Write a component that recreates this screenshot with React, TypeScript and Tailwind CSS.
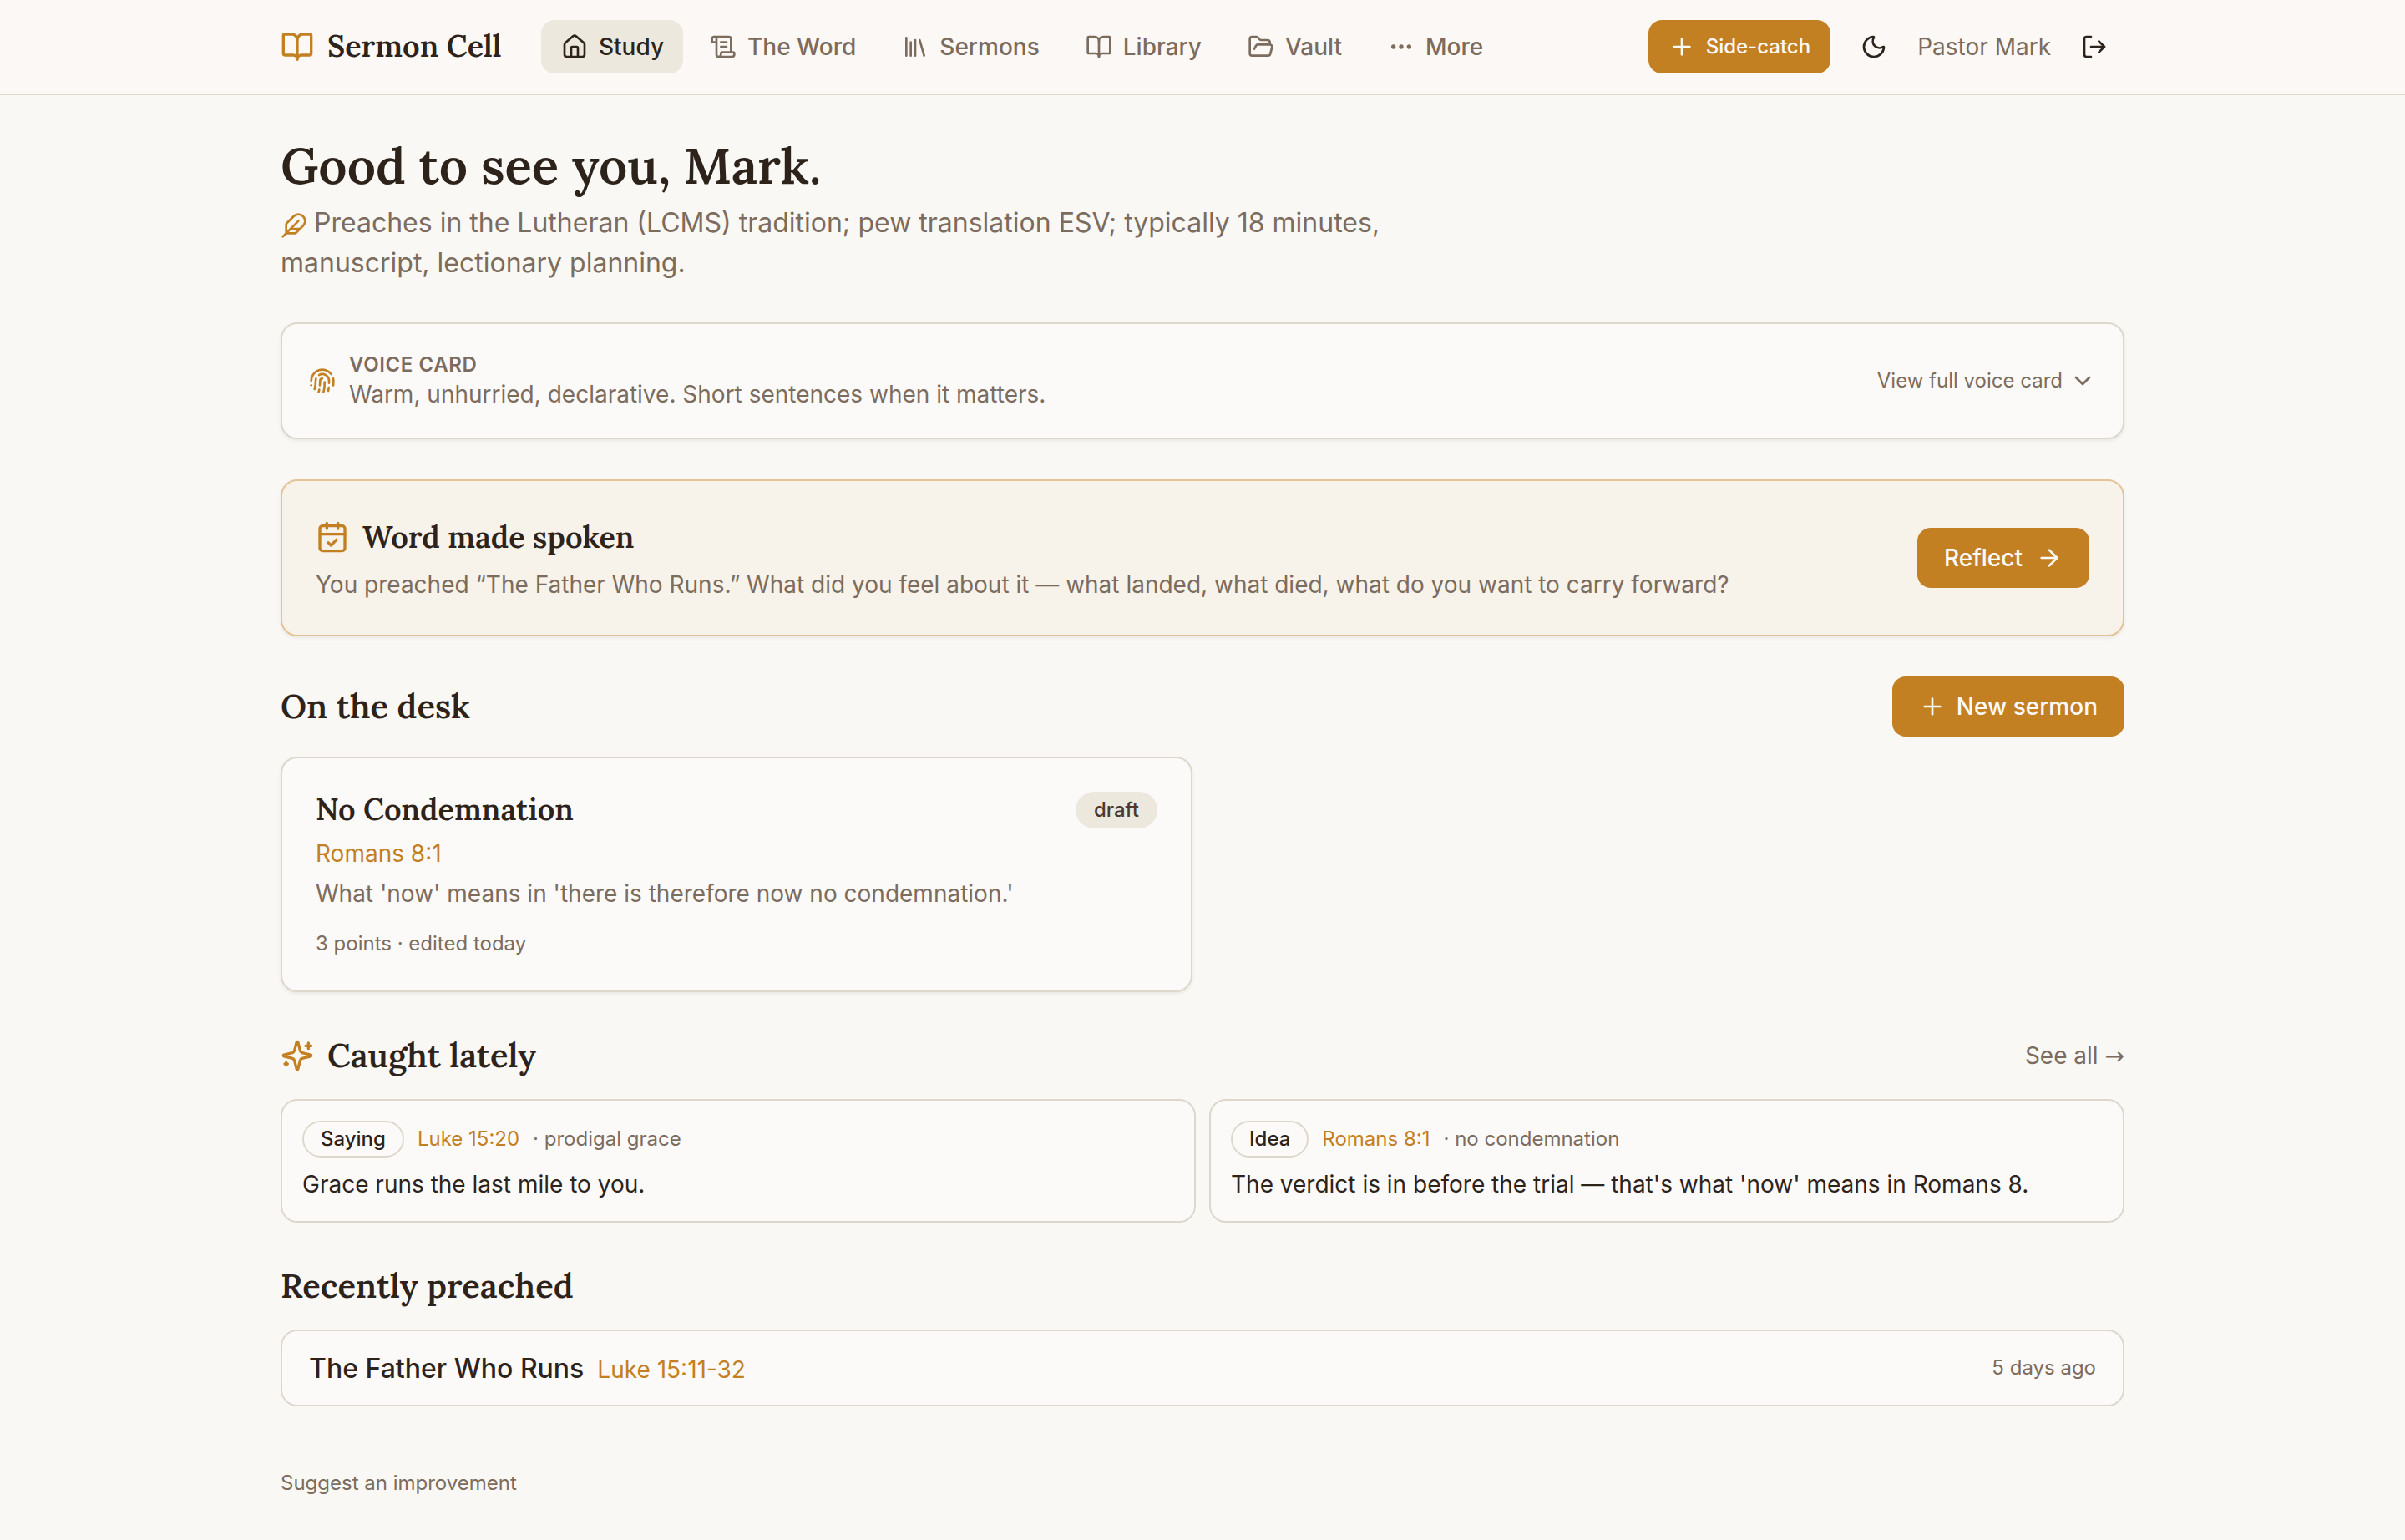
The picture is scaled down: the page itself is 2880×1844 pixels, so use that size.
import type { ReactNode } from "react";
import {
  ArrowRight,
  BookOpen,
  CalendarCheck,
  ChevronDown,
  Ellipsis,
  Feather,
  Fingerprint,
  FolderOpen,
  House,
  Library,
  LogOut,
  Moon,
  Plus,
  ScrollText,
} from "lucide-react";

const serif = "font-['Lora','Liberation_Serif',serif] font-semibold text-[#2d231b]";

const navItems = [
  { label: "Study", icon: House, active: true },
  { label: "The Word", icon: ScrollText },
  { label: "Sermons", icon: Library },
  { label: "Library", icon: BookOpen },
  { label: "Vault", icon: FolderOpen },
  { label: "More", icon: Ellipsis },
];

const catches = [
  { kind: "Saying", reference: "Luke 15:20", topic: "prodigal grace", text: "Grace runs the last mile to you." },
  {
    kind: "Idea",
    reference: "Romans 8:1",
    topic: "no condemnation",
    text: "The verdict is in before the trial — that's what 'now' means in Romans 8.",
  },
];

function Sparkles({ className }: { className?: string }) {
  return (
    <svg
      viewBox="0 0 24 24"
      fill="none"
      stroke="currentColor"
      strokeWidth="2"
      strokeLinecap="round"
      strokeLinejoin="round"
      className={className}
    >
      <path d="M9.937 15.5A2 2 0 0 0 8.5 14.063l-6.135-1.582a.5.5 0 0 1 0-.962L8.5 9.936A2 2 0 0 0 9.937 8.5l1.582-6.135a.5.5 0 0 1 .963 0L14.063 8.5A2 2 0 0 0 15.5 9.937l6.135 1.581a.5.5 0 0 1 0 .964L15.5 14.063a2 2 0 0 0-1.437 1.437l-1.582 6.135a.5.5 0 0 1-.963 0z" />
      <path d="M20 3v4" />
      <path d="M22 5h-4" />
      <path d="M4 17v2" />
      <path d="M5 18H3" />
    </svg>
  );
}

function Header() {
  return (
    <header className="border-b-2 border-[#ded8cc] bg-[#fcf8f5]">
      <div className="mx-auto flex h-28 w-[2208px] items-center">
        <a className="flex items-center gap-4">
          <BookOpen className="size-10 text-[#c38022]" />
          <span className={`${serif} w-[208px] pb-0.5 text-[36px] leading-[54px] whitespace-nowrap`}>Sermon Cell</span>
        </a>

        <nav className="ml-12 flex items-center gap-2">
          {navItems.map(({ label, icon: Icon, active }) => (
            <a
              key={label}
              className={`flex h-16 items-center gap-[13px] rounded-2xl pr-[23px] pl-6 text-[28px] font-medium ${
                active ? "bg-[#ece8dd] text-[#2d231b]" : "text-[#7c6c5e]"
              }`}
            >
              <Icon className="size-8" />
              {label}
            </a>
          ))}
        </nav>

        <div className="ml-auto flex items-center gap-4">
          <button className="flex h-16 items-center gap-[13px] rounded-2xl bg-[#c38022] px-6 text-[24px] font-medium text-[#fcfaf8]">
            <Plus className="size-8" />
            Side-catch
          </button>
          <button className="flex size-18 items-center justify-center text-[#2d231b]">
            <Moon className="size-8" />
          </button>
          <span className="text-[28px] text-[#7c6c5e]">Pastor Mark</span>
          <button className="flex size-18 items-center justify-center text-[#2d231b]">
            <LogOut className="size-8" />
          </button>
        </div>
      </div>
    </header>
  );
}

function PrimaryButton({ children }: { children: ReactNode }) {
  return (
    <button className="flex h-18 shrink-0 items-center gap-[13px] rounded-2xl bg-[#c38022] px-8 text-[28px] font-medium text-[#fcfaf8]">
      {children}
    </button>
  );
}

export default function App() {
  return (
    <div className="min-h-[1844px] bg-[#f9f8f4] font-['Inter',sans-serif] text-[#2d231b]">
      <Header />

      <main className="mx-auto flex w-[2208px] flex-col gap-12 pt-12">
        {/* Greeting */}
        <div>
          <h1 className={`${serif} text-[60px] leading-[72px]`}>Good to see you, Mark.</h1>
          <p className="mt-[9px] -mb-px max-w-[1344px] text-[32px] leading-[48px] text-[#7c6c5e]">
            <Feather className="mr-2 inline size-8 align-text-bottom text-[#c38022]" />
            Preaches in the Lutheran (LCMS) tradition; pew translation ESV; typically 18 minutes, manuscript, lectionary
            planning.
          </p>
        </div>

        {/* Voice card */}
        <section className="flex items-center rounded-[20px] border-2 border-[#ded8cc] bg-[#fcfaf8] p-8 text-[#7c6c5e] shadow-[0_2px_4px_rgba(0,0,0,0.07)]">
          <Fingerprint className="mr-4 size-8 text-[#c38022]" />
          <div>
            <div className="pt-px text-[24px] leading-[31px] font-semibold tracking-wide uppercase">Voice card</div>
            <p className="text-[28px] leading-10">Warm, unhurried, declarative. Short sentences when it matters.</p>
          </div>
          <button className="ml-auto flex items-center gap-2 text-[24px]">
            View full voice card
            <ChevronDown className="size-8" />
          </button>
        </section>

        {/* Reflection prompt */}
        <section className="flex items-center justify-between rounded-[20px] border-2 border-[#e4c497] bg-[#f7f2ea] p-10 shadow-[0_2px_4px_rgba(0,0,0,0.07)]">
          <div>
            <h2 className={`${serif} flex items-center gap-4 text-[36px] leading-[54px]`}>
              <CalendarCheck className="size-10 text-[#c38022]" />
              Word made spoken
            </h2>
            <p className="mt-2.5 text-[28px] leading-10 text-[#7c6c5e]">
              You preached “The Father Who Runs.” What did you feel about it — what landed, what died, what do you want to
              carry forward?
            </p>
          </div>
          <PrimaryButton>
            Reflect
            <ArrowRight className="ml-[3px] size-8" />
          </PrimaryButton>
        </section>

        {/* Sermons in progress */}
        <section>
          <div className="flex items-center justify-between">
            <h2 className={`${serif} text-[40px] leading-[56px]`}>On the desk</h2>
            <PrimaryButton>
              <Plus className="size-8" />
              New sermon
            </PrimaryButton>
          </div>
          <div className="mt-6 grid grid-cols-2 gap-6">
            <article className="rounded-[20px] border-2 border-[#ded8cc] bg-[#fcfaf8] p-10 text-[28px] leading-10 text-[#7c6c5e] shadow-[0_2px_4px_rgba(0,0,0,0.07)]">
              <div className="flex items-start justify-between">
                <h3 className={`${serif} text-[36px] leading-[42px]`}>No Condemnation</h3>
                <span className="flex h-11 items-center rounded-full bg-[#ece8dd] px-[22px] text-[24px] font-medium text-[#4a3a2d]">
                  draft
                </span>
              </div>
              <p className="mt-2.5 text-[#c38022]">Romans 8:1</p>
              <p className="mt-2">What 'now' means in 'there is therefore now no condemnation.'</p>
              <p className="mt-6 text-[24px] leading-8">3 points · edited today</p>
            </article>
          </div>
        </section>

        {/* Side-catches */}
        <section>
          <div className="flex items-center justify-between">
            <h2 className={`${serif} flex items-center gap-4 text-[40px] leading-[56px]`}>
              <Sparkles className="size-10 text-[#c38022]" />
              Caught lately
            </h2>
            <a className="text-[28px] leading-10 text-[#7c6c5e]">
              See all <span className="font-['DejaVu_Sans',sans-serif]">→</span>
            </a>
          </div>
          <div className="mt-6 grid grid-cols-2 gap-4">
            {catches.map((item) => (
              <article key={item.kind} className="rounded-[20px] border-2 border-[#ded8cc] bg-[#fcfaf8] p-6">
                <div className="flex items-center gap-4 text-[24px] text-[#7c6c5e]">
                  <span className="flex h-11 items-center rounded-full border-2 border-[#ded8cc] px-5 font-medium text-[#2d231b]">
                    {item.kind}
                  </span>
                  <span className="text-[#c38022]">{item.reference}</span>
                  <span>· {item.topic}</span>
                </div>
                <p className="mt-3 text-[28px] leading-10">{item.text}</p>
              </article>
            ))}
          </div>
        </section>

        {/* Recently preached */}
        <section>
          <h2 className={`${serif} text-[40px] leading-[56px]`}>Recently preached</h2>
          <div className="mt-6 flex items-center justify-between rounded-[20px] border-2 border-[#ded8cc] bg-[#fcfaf8] px-8 py-5">
            <div className="-mb-px flex items-baseline gap-4 pt-px">
              <span className="text-[32px] leading-[48px] font-medium">The Father Who Runs</span>
              <span className="text-[28px] leading-10 text-[#c38022]">Luke 15:11-32</span>
            </div>
            <span className="text-[24px] text-[#7c6c5e]">5 days ago</span>
          </div>
        </section>

        <footer className="mt-7 text-[24px] leading-8 text-[#7c6c5e]">Suggest an improvement</footer>
      </main>
    </div>
  );
}
